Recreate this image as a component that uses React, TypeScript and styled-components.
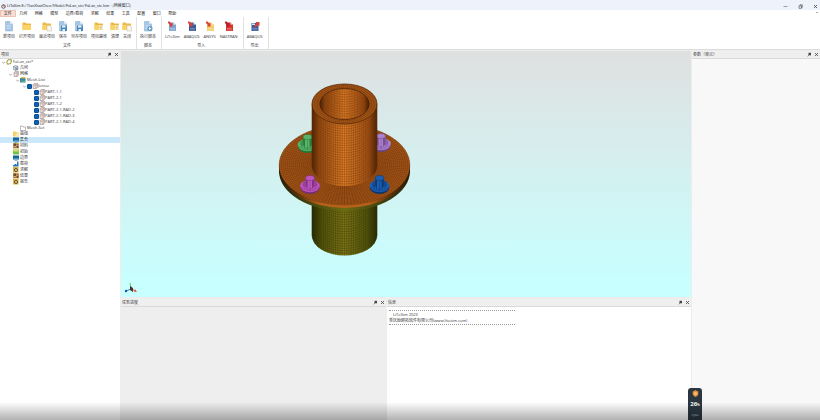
import React from "react";
import styled, { createGlobalStyle } from "styled-components";

const GlobalStyle = createGlobalStyle`
  *, *::before, *::after { box-sizing: border-box; }
  html, body, #root { height: 100%; margin: 0; }
  body { font: 4px/6px "Open Sans", "Noto Sans CJK SC", sans-serif; color: #333; overflow: hidden; background: #fff; }
  button, input { font: inherit; color: inherit; margin: 0; padding: 0; border: 0; background: none; }
  h1, h2, p { margin: 0; font: inherit; }
`;

const Shell = styled.div`
  position: relative;
  display: flex;
  flex-direction: column;
  height: 100vh;
  &::after {
    content: "";
    position: absolute;
    inset: auto 0 0 0;
    height: 18px;
    pointer-events: none;
    background: linear-gradient(rgba(0, 0, 0, 0), rgba(0, 0, 0, 0.3));
  }
`;

const TitleBar = styled.header`
  display: flex;
  align-items: center;
  height: 10px;
  padding: 2px 2px 0 1px;
  gap: 1px;
  background: #eef3fb;
`;
const Title = styled.h1`
  flex: 1;
  font-family: Lato, "Noto Sans CJK SC", sans-serif;
  font-size: 4px;
  white-space: nowrap;
`;
const WindowButtons = styled.div`
  display: flex;
  gap: 10px;
`;
const TinyButton = styled.button`
  display: flex;
  width: 5px;
  height: 5px;
`;

const MenuRow = styled.nav`
  display: flex;
  justify-content: space-between;
  height: 7px;
`;
const MenuList = styled.div`
  display: flex;
  width: 180px;
`;
const MenuItem = styled.button<{ $active?: boolean }>`
  flex: auto;
  line-height: 6px;
  white-space: nowrap;
  color: #222;
  ${(p) => p.$active && "background: #f8ded5; box-shadow: inset 0 0 0 1px #eac4b6;"}
`;

const Ribbon = styled.div`
  display: flex;
  height: 33px;
  border-bottom: 1px solid #dcdcdc;
`;
const RibbonGroup = styled.section`
  display: flex;
  flex-direction: column;
  justify-content: space-between;
  padding: 4px 5px 0 3px;
  border-right: 1px solid #e2e2e2;
`;
const RibbonButtons = styled.div`
  display: flex;
  gap: 4px;
`;
const RibbonButton = styled.button`
  display: flex;
  flex-direction: column;
  align-items: center;
  gap: 2px;
  line-height: 6px;
  white-space: nowrap;
  svg { width: 10px; height: 11px; margin: 0 -1px; }
`;
const GroupLabel = styled.h2`
  text-align: center;
  line-height: 6px;
`;

const Workspace = styled.main`
  flex: 1;
  min-height: 0;
  display: grid;
  grid-template-columns: 120px minmax(0, 1fr) 128px;
  column-gap: 1px;
  padding-top: 1px;
  background: #ededed;
`;
const Center = styled.div`
  display: grid;
  min-height: 0;
  grid-template-rows: minmax(0, 2fr) minmax(0, 1fr);
`;
const Viewport = styled.div`
  min-height: 0;
  background: linear-gradient(#dfe0e0, #d5efef 45%, #c8ffff 94%);
  svg { display: block; width: 100%; height: 100%; }
`;
const BottomRow = styled.div`
  display: grid;
  grid-template-columns: 265fr 304fr;
  column-gap: 1px;
  padding-top: 2px;
`;
const Panel = styled.section<{ $fill: string }>`
  display: flex;
  flex-direction: column;
  min-width: 0;
  min-height: 0;
  background: ${(p) => p.$fill};
`;
const PanelHead = styled.header`
  display: flex;
  align-items: center;
  gap: 2px;
  height: 8px;
  padding: 0 1px;
  border-bottom: 1px solid #dadada;
  background: #efefef;
  h2 { flex: 1; line-height: 6px; }
`;

const Tree = styled.ul`
  margin: 0;
  padding: 0;
  list-style: none;
`;
const TreeRow = styled.li<{ $depth: number; $selected?: boolean }>`
  display: flex;
  align-items: center;
  gap: 1px;
  height: 6px;
  padding-left: ${(p) => p.$depth * 7 + 2}px;
  white-space: nowrap;
  background: ${(p) => (p.$selected ? "#cce8fb" : "none")};
  svg { flex: none; }
`;
const Arrow = styled.span`
  display: flex;
  width: 3px;
`;
const Tick = styled.input`
  appearance: none;
  width: 5px;
  height: 5px;
  border-radius: 1px;
  background: #0b62b5;
  border: 1px solid #0b4f96;
`;
const TreeLabel = styled.label<{ $tight?: boolean }>`
  display: flex;
  align-items: center;
  gap: ${(p) => (p.$tight ? 0 : 1)}px;
`;

const Log = styled.div`
  padding: 3px 2px;
  line-height: 6px;
  white-space: nowrap;
`;
const LogLine = styled.p<{ $indent?: boolean }>`
  padding-left: ${(p) => (p.$indent ? 4 : 0)}px;
`;
const Rule = styled.div`
  width: 42%;
  border-top: 1px dotted #999;
  margin: 0 0 1px;
`;

const Widget = styled.aside`
  position: absolute;
  right: 118px;
  bottom: 0;
  display: flex;
  flex-direction: column;
  align-items: center;
  width: 14px;
  height: 32px;
  padding-top: 2px;
  gap: 2px;
  border-radius: 3px 3px 0 0;
  background: #2b3740;
  color: #fff;
  strong { font-size: 6px; line-height: 10px; }
  strong span { font-size: 3px; }
  small { font-size: 4px; color: #b8c4ca; }
`;

function Pin() {
  return (
    <TinyButton aria-label="Pin">
      <svg viewBox="0 0 5 5" width="5" height="5">
        <path d="M1.500.8 4 .8v2.500H1.500z" fill="#444" />
        <path d="M.6 4.400 2 3" stroke="#555" strokeWidth=".6" />
      </svg>
    </TinyButton>
  );
}
function Close() {
  return (
    <TinyButton aria-label="Close">
      <svg viewBox="0 0 5 5" width="5" height="5">
        <path d="m1 1 3 3m0-3L1 4" stroke="#444" strokeWidth=".8" />
      </svg>
    </TinyButton>
  );
}
function Heading({ children }: { children: React.ReactNode }) {
  return (
    <PanelHead>
      <h2>{children}</h2>
      <Pin />
      <Close />
    </PanelHead>
  );
}

type IconKind = "file" | "folder" | "folderDoc" | "save" | "script" | "import" | "export" | "folderClean";

function RibbonIcon({ kind, tint = "#9dbfdf", badge = "#d9423a" }: { kind: IconKind; tint?: string; badge?: string }) {
  const folder = kind.startsWith("folder");
  return (
    <svg viewBox="0 0 20 22" aria-hidden="true">
      {folder && (
        <>
          <path d="M1 4q0-1 1-1h5l2 2h8q1 0 1 1v12H1z" fill="#edb846" />
          <path d="M1 8h17v9q0 1-1 1H2q-1 0-1-1z" fill="#fbd365" />
        </>
      )}
      {kind === "folderDoc" && <path d="M10 9h6l3 3v8h-9z" fill="#f7f5ed" stroke="#b9b29f" strokeWidth=".9" />}
      {kind === "folderClean" && (
        <>
          <path d="M10 8h8v10h-8z" fill="#f9efca" />
          <path d="M11 10h6m-6 3h5m-5 3h6" stroke="#c69b45" />
        </>
      )}
      {(kind === "file" || kind === "save" || kind === "script") && (
        <>
          <path d="M3 1h9l5 5v14H3z" fill="#a6c6e5" stroke="#82a9cd" />
          <path d="M12 1v5h5" fill="#deebf7" />
          <path d="M5 9h9m-9 3h9m-9 3h7" stroke="#deebf7" />
        </>
      )}
      {kind === "save" && (
        <>
          <path d="M6 9h12v11H6z" fill="#4b88ba" />
          <path d="M8 9h7v4H8zm1 7h5v4H9z" fill="#e6f0f8" />
        </>
      )}
      {kind === "script" && (
        <>
          <circle cx="14" cy="15" r="5" fill="#5c9bc8" />
          <path d="m12 12 5 3-5 3z" fill="#fff" />
        </>
      )}
      {kind === "import" && (
        <>
          <path d="M4 3h9l5 4v13H4z" fill={tint} />
          <path d="M13 3v4h5" fill="#eef2f7" />
          <path d="M6 15h10m-10 3h10" stroke="#fff" strokeOpacity=".55" />
          <path d="M2 1h3l4 4 2-2v8H4l2-3-4-4z" fill={badge} />
        </>
      )}
      {kind === "export" && (
        <>
          <path d="M3 4h14v16H3z" fill={tint} />
          <path d="M5 15h10m-10 3h10" stroke="#fff" strokeOpacity=".55" />
          <path d="M4 5h6v3H4z" fill="#dde4f0" />
          <path d="m8 10 5-5-2-3h8v8l-3-2-5 5z" fill={badge} />
        </>
      )}
    </svg>
  );
}

type Tool = [string, IconKind, string?, string?];
const groups: { label: string; tools: Tool[] }[] = [
  {
    label: "文件",
    tools: [
      ["新项目", "file"],
      ["打开项目", "folder"],
      ["最近项目", "folderDoc"],
      ["保存", "save"],
      ["另存项目", "save"],
      ["项目路径", "folderClean"],
      ["清理", "folderClean"],
      ["关闭", "folderDoc"],
    ],
  },
  { label: "脚本", tools: [["执行脚本", "script"]] },
  {
    label: "导入",
    tools: [
      ["LiToSim", "import", "#7fa6cf"],
      ["ABAQUS", "import", "#3c5b9b"],
      ["ANSYS", "import", "#f3cf69"],
      ["NASTRAN", "import", "#d6342c", "#b81e22"],
    ],
  },
  { label: "导出", tools: [["ABAQUS", "export", "#3c5b9b"]] },
];

const menus = ["文件", "几何", "网格", "模型", "边界/载荷", "求解", "结果", "工具", "配置", "窗口", "帮助"];

type Glyph = "ring" | "cube" | "mesh" | "list" | "folder" | "table" | "screen" | "blocks" | "layer" | "chart" | "gear";
type Node = { text: string; depth: number; glyph: Glyph; open?: boolean; check?: boolean; selected?: boolean };

const nodes: Node[] = [
  { text: "FaLan_stc*", depth: 0, glyph: "ring", open: true },
  { text: "几何", depth: 1, glyph: "cube" },
  { text: "网格", depth: 1, glyph: "mesh", open: true },
  { text: "Mesh-List", depth: 2, glyph: "list", open: true },
  { text: "Jietou", depth: 3, glyph: "mesh", open: true, check: true },
  ...["PART-1-1", "PART-2-1", "PART-1-2", "PART-2-1-RAD-2", "PART-2-1-RAD-3", "PART-2-1-RAD-4"].map(
    (text): Node => ({ text, depth: 4, glyph: "mesh", check: true }),
  ),
  { text: "Mesh-Set", depth: 2, glyph: "folder" },
  { text: "曲线", depth: 1, glyph: "table" },
  { text: "集合", depth: 1, glyph: "screen", selected: true },
  { text: "材料", depth: 1, glyph: "blocks" },
  { text: "初始", depth: 1, glyph: "layer" },
  { text: "边界", depth: 1, glyph: "screen" },
  { text: "载荷", depth: 1, glyph: "chart" },
  { text: "求解", depth: 1, glyph: "gear" },
  { text: "结果", depth: 1, glyph: "blocks" },
  { text: "报告", depth: 1, glyph: "gear" },
];

const glyphs: Record<Glyph, React.ReactNode> = {
  ring: <path d="M4 1.500h7L9.500 9 3 10.500 1.500 6z" fill="none" stroke="#98962c" strokeWidth="2" />,
  cube: (
    <>
      <path d="m1 3 4-2 5 2v6l-5 2-4-2z" fill="#dce7f1" stroke="#53636f" />
      <path d="m1 3 4 2 5-2M5 5v5" stroke="#53636f" fill="none" />
      <circle cx="8" cy="8" r="2" fill="#6c8299" />
    </>
  ),
  mesh: (
    <>
      <path d="M2 3l2-2h7v7l-2 3H2z" fill="#e6dedb" stroke="#947d78" />
      <path d="M2 4h6v7M8 4l3-3" stroke="#a37b72" fill="none" />
    </>
  ),
  list: (
    <>
      <path d="M0 2h11v9H0z" fill="#2f83ad" />
      <path d="M2 0h8l2 3H2z" fill="#d9bd45" />
      <path d="M2 7h8v3H2z" fill="#63ab6d" />
    </>
  ),
  folder: <path d="M1 2h4l1 2h5v7H1z" fill="#fff" stroke="#777" />,
  table: (
    <>
      <path d="M0 1h6l1 2h4v8H0z" fill="#f4d064" />
      <path d="M5 5h7v6H5z" fill="#f7e7b0" />
    </>
  ),
  screen: (
    <>
      <path d="M0 1h12v8H0z" fill="#14659e" />
      <path d="M1 6h10v2H1z" fill="#3f9db2" />
      <path d="M3 10h6v1H3z" fill="#4a7289" />
    </>
  ),
  blocks: (
    <>
      <path d="M0 0h12v11H0z" fill="#d4a94f" />
      <path d="M1 1h5v5H1zm6 5h4v4H7z" fill="#704b32" />
      <path d="M7 2h4v3H7zM1 8h4v2H1z" fill="#935f7a" />
    </>
  ),
  layer: (
    <>
      <path d="M0 1h12v10H0z" fill="#76bf4a" />
      <path d="M1 2h10v3H1z" fill="#e6dc61" />
    </>
  ),
  chart: <path d="M0 8h3V6h3v1h2V1h3v10H0z" fill="#2778b7" />,
  gear: (
    <>
      <path d="M0 0h11v11H0z" fill="#d9b241" />
      <circle cx="6" cy="6" r="3" fill="#f0e0a0" stroke="#5c4628" strokeWidth="2" />
    </>
  ),
};

const CX = 344.5;
const arcAt = (cy: number, rx: number, ry: number) => `M${CX - rx} ${cy}A${rx} ${ry} 0 0 0 ${CX + rx} ${cy}`;

function wallMesh(top: number, bottom: number, rx: number, ry: number) {
  let d = "";
  for (let a = -88; a <= 88; a += 4) {
    const t = (a * Math.PI) / 180;
    const x = CX + rx * Math.sin(t);
    const dy = ry * Math.cos(t);
    d += `M${x.toFixed(2)} ${(top + dy).toFixed(2)}V${(bottom + dy).toFixed(2)}`;
  }
  for (let y = top; y <= bottom; y += 2.4) d += arcAt(y, rx, ry);
  return d;
}

function ringMesh(cy: number, rx: number, ry: number, inner: number, rings: number, step: number) {
  let d = "";
  for (let i = 0; i <= rings; i++) {
    const k = inner + ((1 - inner) * i) / rings;
    d += `M${CX - rx * k} ${cy}a${rx * k} ${ry * k} 0 1 0 ${2 * rx * k} 0a${rx * k} ${ry * k} 0 1 0 ${-2 * rx * k} 0`;
  }
  for (let a = 0; a < 360; a += step) {
    const t = (a * Math.PI) / 180;
    const c = Math.cos(t);
    const s = Math.sin(t);
    d += `M${(CX + rx * inner * c).toFixed(2)} ${(cy + ry * inner * s).toFixed(2)}L${(CX + rx * c).toFixed(2)} ${(cy + ry * s).toFixed(2)}`;
  }
  return d;
}

function Bolt({ x, y, color, dark }: { x: number; y: number; color: string; dark: string }) {
  return (
    <g transform={`translate(${x} ${y})`}>
      <ellipse cy="2.500" rx="9.800" ry="6.500" fill={dark} />
      <ellipse cy="1" rx="9.800" ry="6.200" fill={color} />
      <path d="M-7-3 0-6l7 3v4L0 5l-7-4z" fill={dark} opacity=".5" />
      <path d="M-4.500-7v8a4.500 2.500 0 0 0 9 0v-8z" fill={color} />
      <path d="M-4.500-7v8l2 2v-9zM2-5v8l2.500-2v-8z" fill={dark} opacity=".8" />
      <ellipse cy="-7" rx="4.500" ry="2.500" fill={color} stroke={dark} strokeWidth=".5" />
      <path d="M-9 2q9 8 18 0M-7-1l2 5m2-8v9m3-9v10m3-10v9m4-6-2 5" stroke={dark} strokeWidth=".4" fill="none" />
    </g>
  );
}

function Model() {
  return (
    <svg viewBox="121 51 570 246" role="img" aria-label="Flange mesh">
      <defs>
        <linearGradient id="wall">
          <stop offset="0" stopColor="#4d2408" />
          <stop offset=".1" stopColor="#984b12" />
          <stop offset=".5" stopColor="#de7c26" />
          <stop offset=".88" stopColor="#a65215" />
          <stop offset="1" stopColor="#4d2408" />
        </linearGradient>
        <linearGradient id="lower">
          <stop offset="0" stopColor="#2f3006" />
          <stop offset=".15" stopColor="#57570c" />
          <stop offset=".5" stopColor="#7d7617" />
          <stop offset=".85" stopColor="#57570c" />
          <stop offset="1" stopColor="#2f3006" />
        </linearGradient>
        <linearGradient id="rim">
          <stop offset="0" stopColor="#2a1707" />
          <stop offset=".14" stopColor="#5a2f0b" />
          <stop offset=".32" stopColor="#b5611a" />
          <stop offset=".68" stopColor="#b5611a" />
          <stop offset=".86" stopColor="#5a2f0b" />
          <stop offset="1" stopColor="#2a1707" />
        </linearGradient>
        <linearGradient id="rimLow">
          <stop offset="0" stopColor="#23210a" />
          <stop offset=".5" stopColor="#6a6c12" />
          <stop offset="1" stopColor="#23210a" />
        </linearGradient>
      </defs>
      <path d="M312 195v40.500a32.500 20 0 0 0 65 0V195z" fill="url(#lower)" />
      <path d={wallMesh(190, 235.5, 32.5, 20)} stroke="#2b2e05" strokeWidth=".5" opacity=".6" fill="none" />
      <path d="M279 165v6a65.500 40 0 0 0 131 0v-6z" fill="url(#rimLow)" />
      <path d="M279 165v3a65.500 40 0 0 0 131 0v-3z" fill="url(#rim)" />
      <ellipse cx={CX} cy="165" rx="65.500" ry="40" fill="#a85717" />
      <path d={ringMesh(165, 65.5, 40, 0.5, 16, 3)} stroke="#512506" strokeWidth=".5" opacity=".55" fill="none" />
      <Bolt x={307.5} y={144} color="#58b568" dark="#23743a" />
      <Bolt x={381} y={143} color="#ad80cd" dark="#694584" />
      <path d="M312 104v62a32.500 20 0 0 0 65 0v-62z" fill="url(#wall)" />
      <path d={wallMesh(104, 166, 32.5, 20)} stroke="#5c2a06" strokeWidth=".5" opacity=".55" fill="none" />
      <ellipse cx={CX} cy="104" rx="32.500" ry="20" fill="#a95818" stroke="#5b2b09" strokeWidth=".7" />
      <path d={ringMesh(104, 32.5, 20, 0.76, 3, 4)} stroke="#512506" strokeWidth=".4" opacity=".6" fill="none" />
      <ellipse cx={CX} cy="104" rx="24.600" ry="15.500" fill="url(#wall)" stroke="#4a220a" strokeWidth=".8" />
      <clipPath id="bore">
        <ellipse cx={CX} cy="104" rx="24" ry="15" />
      </clipPath>
      <path d={wallMesh(70, 120, 24.6, 15)} clipPath="url(#bore)" stroke="#5c2a06" strokeWidth=".5" opacity=".5" fill="none" />
      <Bolt x={310} y={185} color="#bd55bd" dark="#772d7c" />
      <Bolt x={379.5} y={185} color="#1b5eb0" dark="#0b3671" />
      <g fill="none" strokeWidth="1">
        <path d="m131 289 5 2" stroke="#d85a45" />
        <path d="m131 289-1-6" stroke="#7dbf62" />
        <path d="m131 289-5 2" stroke="#4778ae" />
      </g>
      <path d="m135 289 2 3-3 0z" fill="#d46a58" />
      <circle cx="126" cy="291" r="1.200" fill="#165a9c" />
      <path d="m130 286 3 2v4l-3-2z" fill="#512f35" />
    </svg>
  );
}

export default function App() {
  return (
    <>
      <GlobalStyle />
      <Shell>
        <TitleBar>
          <svg viewBox="0 0 10 10" width="5" height="5" aria-hidden="true">
            <circle cx="5" cy="5" r="3.500" fill="#fff" stroke="#5d4a50" strokeWidth="2" />
            <path d="M5 2v3h3" stroke="#b84437" fill="none" />
          </svg>
          <Title>LiToSim E:/TianXiaoChen/Model/FaLan_stc/FaLan_stc.lsm - [网格窗口]</Title>
          <WindowButtons>
            <TinyButton aria-label="Minimize">
              <svg viewBox="0 0 5 5" width="5" height="5">
                <path d="M.5 2.500h4" stroke="#666" strokeWidth=".6" />
              </svg>
            </TinyButton>
            <TinyButton aria-label="Restore">
              <svg viewBox="0 0 5 5" width="5" height="5">
                <path d="M1 1.800h2.500v2.500H1zM2 1.800V.8h2.300v2.500h-.8" stroke="#444" strokeWidth=".6" fill="none" />
              </svg>
            </TinyButton>
            <Close />
          </WindowButtons>
        </TitleBar>
        <MenuRow>
          <MenuList>
            {menus.map((m, i) => (
              <MenuItem key={m} $active={i === 0}>
                {m}
              </MenuItem>
            ))}
          </MenuList>
          <TinyButton aria-label="Collapse ribbon">
            <svg viewBox="0 0 5 5" width="5" height="5">
              <path d="m1 3 1-1 1 1" stroke="#777" strokeWidth=".6" fill="none" />
            </svg>
          </TinyButton>
        </MenuRow>
        <Ribbon>
          {groups.map((g) => (
            <RibbonGroup key={g.label}>
              <RibbonButtons>
                {g.tools.map(([label, kind, tint, badge]) => (
                  <RibbonButton key={label}>
                    <RibbonIcon kind={kind} tint={tint} badge={badge} />
                    {label}
                  </RibbonButton>
                ))}
              </RibbonButtons>
              <GroupLabel>{g.label}</GroupLabel>
            </RibbonGroup>
          ))}
        </Ribbon>
        <Workspace>
          <Panel $fill="#fff">
            <Heading>项目</Heading>
            <Tree>
              {nodes.map((n) => (
                <TreeRow key={n.text} $depth={n.depth} $selected={n.selected}>
                  <Arrow>
                    {n.open && (
                      <svg viewBox="0 0 3 3" width="3" height="3">
                        <path d="m.3 1 1.200 1.200L2.700 1" stroke="#666" strokeWidth=".6" fill="none" />
                      </svg>
                    )}
                  </Arrow>
                  <TreeLabel $tight={n.check}>
                    {n.check && <Tick type="checkbox" defaultChecked />}
                    <svg viewBox="0 0 12 12" width="6" height="6" aria-hidden="true">
                      {glyphs[n.glyph]}
                    </svg>
                    {n.text}
                  </TreeLabel>
                </TreeRow>
              ))}
            </Tree>
          </Panel>
          <Center>
            <Viewport>
              <Model />
            </Viewport>
            <BottomRow>
              <Panel $fill="#eeeeee">
                <Heading>任务进度</Heading>
              </Panel>
              <Panel $fill="#fff">
                <Heading>信息</Heading>
                <Log>
                  <Rule />
                  <LogLine $indent>LiToSim 2023</LogLine>
                  <LogLine>重庆励颐拓软件有限公司(www.litosim.com)</LogLine>
                  <Rule />
                </Log>
              </Panel>
            </BottomRow>
          </Center>
          <Panel $fill="#f8f8f8">
            <Heading>参数（单元）</Heading>
          </Panel>
        </Workspace>
        <Widget>
          <svg viewBox="0 0 10 10" width="7" height="7" aria-hidden="true">
            <path d="M5 0q2 2 4 2v4q-1 3-4 4-3-1-4-4V2q2 0 4-2z" fill="#e9903c" />
            <circle cx="5" cy="5" r="2" fill="#ffc37a" />
          </svg>
          <strong>
            26<span>%</span>
          </strong>
          <small>cpu</small>
        </Widget>
      </Shell>
    </>
  );
}
